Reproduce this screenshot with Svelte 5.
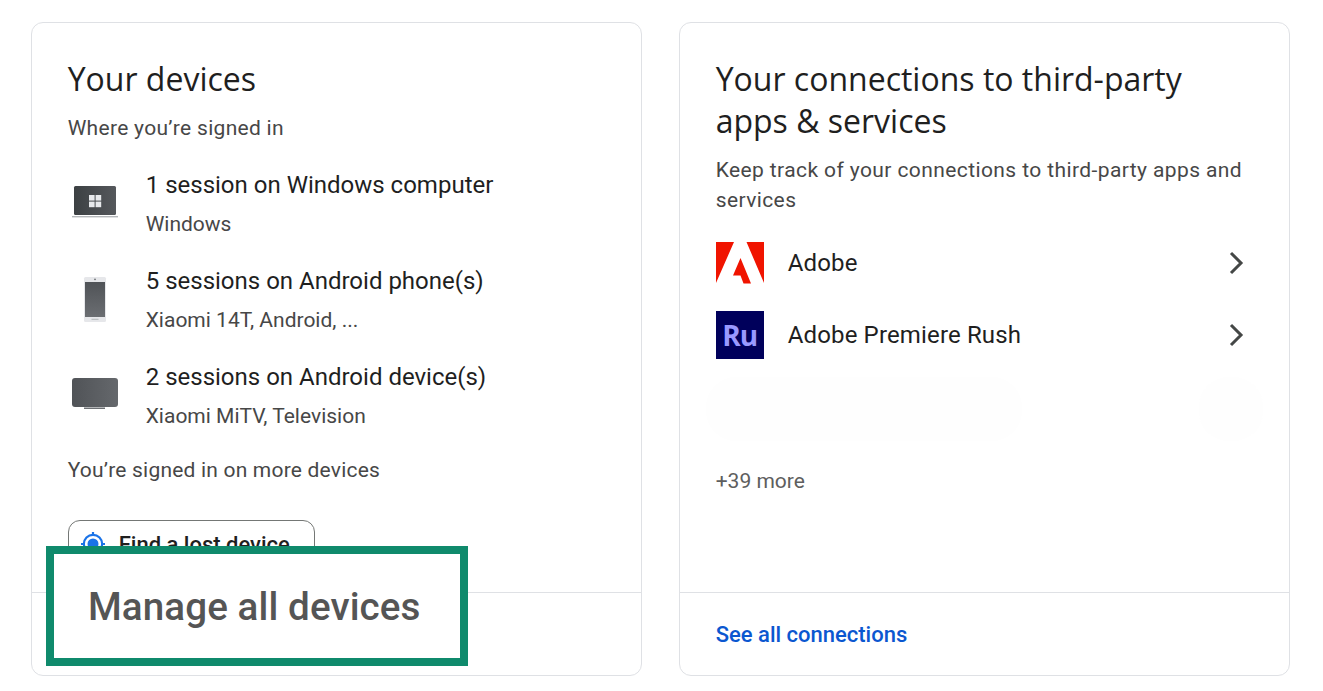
<script>
  const devices = [
    { kind: 'laptop', title: '1 session on Windows computer', sub: 'Windows' },
    { kind: 'phone', title: '5 sessions on Android phone(s)', sub: 'Xiaomi 14T, Android, ...' },
    { kind: 'tv', title: '2 sessions on Android device(s)', sub: 'Xiaomi MiTV, Television' }
  ];
</script>

<div class="page">
  <section class="card">
    <div class="body">
      <h2>Your devices</h2>
      <p class="desc">Where you’re signed in</p>
      <ul class="devices">
        {#each devices as d}
          <li>
            <span class="dev-icon">
              {#if d.kind === 'laptop'}
                <svg width="48" height="48" viewBox="0 0 48 48">
                  <defs>
                    <linearGradient id="lg" x1="0" y1="0" x2="1" y2="0">
                      <stop offset="0" stop-color="#3c4043"/>
                      <stop offset="1" stop-color="#55585c"/>
                    </linearGradient>
                  </defs>
                  <rect x="3" y="6" width="42" height="29" rx="1.5" fill="url(#lg)"/>
                  <rect x="1" y="36" width="46" height="1.4" fill="#b4b7ba"/>
                  <rect x="18" y="15" width="5.6" height="5.6" fill="#e8eaed"/>
                  <rect x="24.6" y="15" width="5.6" height="5.6" fill="#e8eaed"/>
                  <rect x="18" y="21.600" width="5.6" height="5.6" fill="#e8eaed"/>
                  <rect x="24.6" y="21.600" width="5.6" height="5.6" fill="#e8eaed"/>
                </svg>
              {:else if d.kind === 'phone'}
                <svg width="48" height="48" viewBox="0 0 48 48">
                  <defs>
                    <linearGradient id="pg" x1="0" y1="0" x2="0" y2="1">
                      <stop offset="0" stop-color="#505357"/>
                      <stop offset="1" stop-color="#6b6e72"/>
                    </linearGradient>
                  </defs>
                  <rect x="13" y="1" width="22" height="45" rx="1.5" fill="#e6e7ea"/>
                  <rect x="14" y="6" width="20" height="35" fill="url(#pg)"/>
                  <circle cx="24" cy="3.4" r="0.8" fill="#5f6368"/>
                  <rect x="20.5" y="42.800" width="7" height="1" fill="#b4b7ba"/>
                </svg>
              {:else}
                <svg width="48" height="48" viewBox="0 0 48 48">
                  <defs>
                    <linearGradient id="tg" x1="0" y1="0" x2="1" y2="0">
                      <stop offset="0" stop-color="#505357"/>
                      <stop offset="1" stop-color="#65686c"/>
                    </linearGradient>
                  </defs>
                  <rect x="1" y="6" width="46" height="29" rx="3" fill="url(#tg)"/>
                  <rect x="13" y="35.500" width="21" height="1.5" fill="#6d7074"/>
                </svg>
              {/if}
            </span>
            <span class="dev-text">
              <span class="dev-title">{d.title}</span>
              <span class="dev-sub">{d.sub}</span>
            </span>
          </li>
        {/each}
      </ul>
      <p class="more-devices">You’re signed in on more devices</p>
      <div class="lost">
        <svg width="24" height="24" viewBox="0 0 24 24" fill="none">
          <circle cx="12" cy="12" r="9.200" stroke="#1a73e8" stroke-width="2.200"/>
          <circle cx="12" cy="12" r="5.500" fill="#1a73e8"/>
          <path d="M12 0v4M12 20v4M0 12h4M20 12h4" stroke="#1a73e8" stroke-width="2.200"/>
        </svg>
        <span>Find a lost device</span>
      </div>
    </div>
    <div class="foot"></div>
    <div class="callout">Manage all devices</div>
  </section>

  <section class="card">
    <div class="body">
      <h2>Your connections to third-party apps &amp; services</h2>
      <p class="desc wide">Keep track of your connections to third-party apps and services</p>
      <ul class="apps">
        <li>
          <svg class="logo" width="48" height="42" viewBox="0 0 48 42">
            <path d="M0 0h18L0 41zM30.500 0H48v41zM24.500 16 35 41.500h-7.500l-3-8H17z" fill="#f01400"/>
          </svg>
          <span class="app-name">Adobe</span>
          <svg class="chev" width="24" height="24" viewBox="0 0 24 24"><path d="M4 2l10 10L4 22" fill="none" stroke="#444746" stroke-width="3"/></svg>
        </li>
        <li>
          <span class="ru">Ru</span>
          <span class="app-name">Adobe Premiere Rush</span>
          <svg class="chev" width="24" height="24" viewBox="0 0 24 24"><path d="M4 2l10 10L4 22" fill="none" stroke="#444746" stroke-width="3"/></svg>
        </li>
      </ul>
      <div class="ghost"><span class="g1"></span><span class="g2"></span></div>
      <p class="more">+39 more</p>
    </div>
    <div class="foot"><span class="link">See all connections</span></div>
  </section>
</div>

<style>
  :global(body) {
    margin: 0;
    background: #fff;
    font-family: Roboto, "Liberation Sans", sans-serif;
  }
  .page {
    display: grid;
    grid-template-columns: 611.6px 611.6px;
    gap: 36.4px;
    padding: 22px 0 0 30.7px;
    height: 691px;
    box-sizing: border-box;
  }
  .card {
    position: relative;
    height: 654px;
    box-sizing: border-box;
    border: 1px solid #dfe1e5;
    border-radius: 12px;
    display: flex;
    flex-direction: column;
    background: #fff;
  }
  .body {
    flex: 1;
    padding: 35px 36px 0;
    overflow: hidden;
  }
  h2 {
    margin: 0;
    font-weight: 400;
    font-size: 32px;
    line-height: 42px;
    color: #1f1f1f;
    font-family: "Open Sans", Roboto, sans-serif;
  }
  .desc {
    margin: 13px 0 0;
    font-size: 21px;
    line-height: 30px;
    color: #474747;
    letter-spacing: 0.3px;
  }
  .wide { letter-spacing: 0.4px; }
  .devices {
    list-style: none;
    margin: 13px 0 0;
    padding: 0;
  }
  .devices li {
    display: flex;
    align-items: center;
    gap: 30px;
    height: 96px;
  }
  .dev-icon { display: flex; width: 48px; height: 48px; flex: none; margin-left: 3px; margin-right: -3px; }
  .dev-text { display: flex; flex-direction: column; }
  .dev-title { font-size: 24px; line-height: 36px; color: #1f1f1f; }
  .dev-sub { font-size: 21px; line-height: 36px; color: #474747; margin-top: 3px; }
  .more-devices {
    margin: 11px 0 0;
    font-size: 21px;
    line-height: 30px;
    color: #474747;
    letter-spacing: 0.2px;
  }
  .lost {
    display: flex;
    align-items: center;
    gap: 14px;
    width: 247px;
    height: 48px;
    box-sizing: border-box;
    margin-top: 35px;
    padding-left: 12px;
    border: 1px solid #747775;
    border-radius: 12px;
    font-size: 22px;
    font-weight: 500;
    color: #1f1f1f;
  }
  .foot {
    flex: none;
    height: 83px;
    border-top: 1px solid #dfe1e5;
    box-sizing: border-box;
    display: flex;
    align-items: center;
    padding: 0 36px;
  }
  .link { color: #0b57d0; font-size: 22px; font-weight: 500; }
  .callout {
    position: absolute;
    left: 14.3px;
    top: 523px;
    width: 422px;
    height: 120px;
    box-sizing: border-box;
    border: 8px solid #0f8a6c;
    background: #fff;
    padding-left: 34px;
    display: flex;
    align-items: center;
    font-size: 38.6px;
    font-weight: 500;
    letter-spacing: 0.1px;
    color: #555;
  }
  .apps { list-style: none; margin: 12px 0 0; padding: 0; }
  .apps li {
    display: flex;
    align-items: center;
    height: 72px;
    gap: 24px;
  }
  .logo { flex: none; }
  .ru {
    flex: none;
    width: 48px;
    height: 48px;
    background: #00005b;
    color: #9999ff;
    font-weight: 700;
    font-size: 28px;
    display: flex;
    align-items: center;
    justify-content: center;
    font-family: "Open Sans", sans-serif;
    letter-spacing: -1px;
  }
  .app-name { flex: 1; font-size: 24px; letter-spacing: 0.15px; color: #1f1f1f; }
  .chev { flex: none; margin-right: 2px; }
  .ghost { height: 64px; margin: 6px -10px 0 -10px; display: flex; justify-content: space-between; }
  .g1 { width: 316px; height: 64px; border-radius: 30px; background: #fefefe; }
  .g2 { width: 64px; height: 64px; border-radius: 30px; background: #fefefe; }
  .more { margin: 25px 0 0; font-size: 21px; line-height: 30px; color: #5e5e5e; }
</style>
